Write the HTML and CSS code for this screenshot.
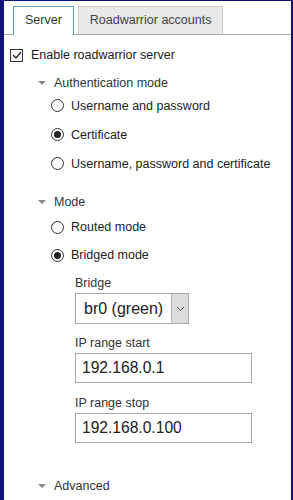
FILE: index.html
```html
<!DOCTYPE html>
<html>

<head>
    <title>Roadwarrior</title>
    <link rel="stylesheet" href="styles.css">
</head>

<body>
    <div class="frame">
        <div class="tabs">
            <div class="tab active">Server</div>
            <div class="tab">Roadwarrior accounts</div>
        </div>

        <label class="check-row">
            <span class="checkbox"><svg width="10" height="8" viewBox="0 0 10 8"><path d="M1 4 L4 7 L9 1" fill="none" stroke="#222" stroke-width="1.3"/></svg></span>
            Enable roadwarrior server
        </label>

        <div class="section">
            <div class="section-title"><span class="caret"></span>Authentication mode</div>
            <div class="radio-row"><span class="radio"></span>Username and password</div>
            <div class="radio-row"><span class="radio checked"></span>Certificate</div>
            <div class="radio-row"><span class="radio"></span>Username, password and certificate</div>
        </div>

        <div class="section mode">
            <div class="section-title"><span class="caret"></span>Mode</div>
            <div class="radio-row"><span class="radio"></span>Routed mode</div>
            <div class="radio-row"><span class="radio checked"></span>Bridged mode</div>

            <div class="fields">
                <div class="field-label">Bridge</div>
                <div class="select">
                    <span class="select-value">br0 (green)</span>
                    <span class="select-btn"><svg width="9" height="6" viewBox="0 0 9 6"><path d="M1 1 L4.5 4.5 L8 1" fill="none" stroke="#555" stroke-width="1"/></svg></span>
                </div>

                <div class="field-label">IP range start</div>
                <div class="text-input">192.168.0.1</div>

                <div class="field-label">IP range stop</div>
                <div class="text-input">192.168.0.100</div>
            </div>
        </div>

        <div class="section advanced">
            <div class="section-title"><span class="caret"></span>Advanced</div>
        </div>
    </div>
</body>

</html>
```

FILE: styles.css
```css
* {
    margin: 0;
    padding: 0;
    box-sizing: border-box;
}

body {
    font-family: "Liberation Sans", Arial, sans-serif;
    font-size: 12.5px;
    color: #222;
    background: white;
    overflow: hidden;
}

.frame {
    width: 293px;
    height: 500px;
    border-left: 4px solid #10107a;
    border-top: 1px solid #10107a;
    border-right: 2px solid #10107a;
    overflow: hidden;
}

.tabs {
    display: flex;
    gap: 4px;
    padding: 5px 0 0 9px;
    border-bottom: 1px solid #a8a8a8;
    height: 34px;
}

.tab {
    height: 28px;
    line-height: 26px;
    padding: 0 11px;
    background: #e9e9e9;
    border: 1px solid #d0d0d0;
    border-bottom: none;
    color: #444;
}

.tab.active {
    background: white;
    border-color: #5aa0a8;
    height: 29px;
    margin-bottom: -1px;
    color: #333;
}

.check-row {
    display: flex;
    align-items: center;
    gap: 8px;
    padding: 10px 0 0 6px;
    height: 30px;
}

.checkbox {
    width: 13px;
    height: 13px;
    border: 1px solid #333;
    display: flex;
    align-items: center;
    justify-content: center;
}

.section {
    padding: 10px 0 0 34px;
}

.section-title {
    display: flex;
    align-items: center;
    height: 16px;
    color: #333;
}

.caret {
    width: 0;
    height: 0;
    border-left: 4px solid transparent;
    border-right: 4px solid transparent;
    border-top: 4px solid #888;
    margin-right: 8px;
}

.radio-row {
    display: flex;
    align-items: center;
    height: 29px;
    padding-left: 13px;
}

.radio {
    width: 13px;
    height: 13px;
    border: 1px solid #333;
    border-radius: 50%;
    margin-right: 7px;
    position: relative;
}

.radio.checked::after {
    content: "";
    position: absolute;
    left: 2px;
    top: 2px;
    width: 7px;
    height: 7px;
    border-radius: 50%;
    background: #222;
}

.mode {
    padding-top: 16px;
}

.mode .section-title {
    margin-bottom: 3px;
}

.mode .radio-row {
    height: 28px;
}

.fields {
    padding: 5px 0 0 37px;
}

.field-label {
    height: 18px;
    line-height: 18px;
    color: #333;
}

.select {
    display: flex;
    width: 114px;
    height: 31px;
    border: 1px solid #a9a9a9;
    margin: 1px 0 10px;
}

.select-value {
    flex: 1;
    font-size: 16px;
    line-height: 29px;
    padding-left: 8px;
}

.select-btn {
    width: 17px;
    background: #dcdcdc;
    border-left: 1px solid #b8b8b8;
    display: flex;
    align-items: center;
    justify-content: center;
}

.text-input {
    width: 177px;
    height: 30px;
    border: 1px solid #a9a9a9;
    font-size: 15.6px;
    line-height: 28px;
    padding-left: 6px;
    margin: 1px 0 11px;
}

.advanced {
    padding-top: 24px;
}
```
